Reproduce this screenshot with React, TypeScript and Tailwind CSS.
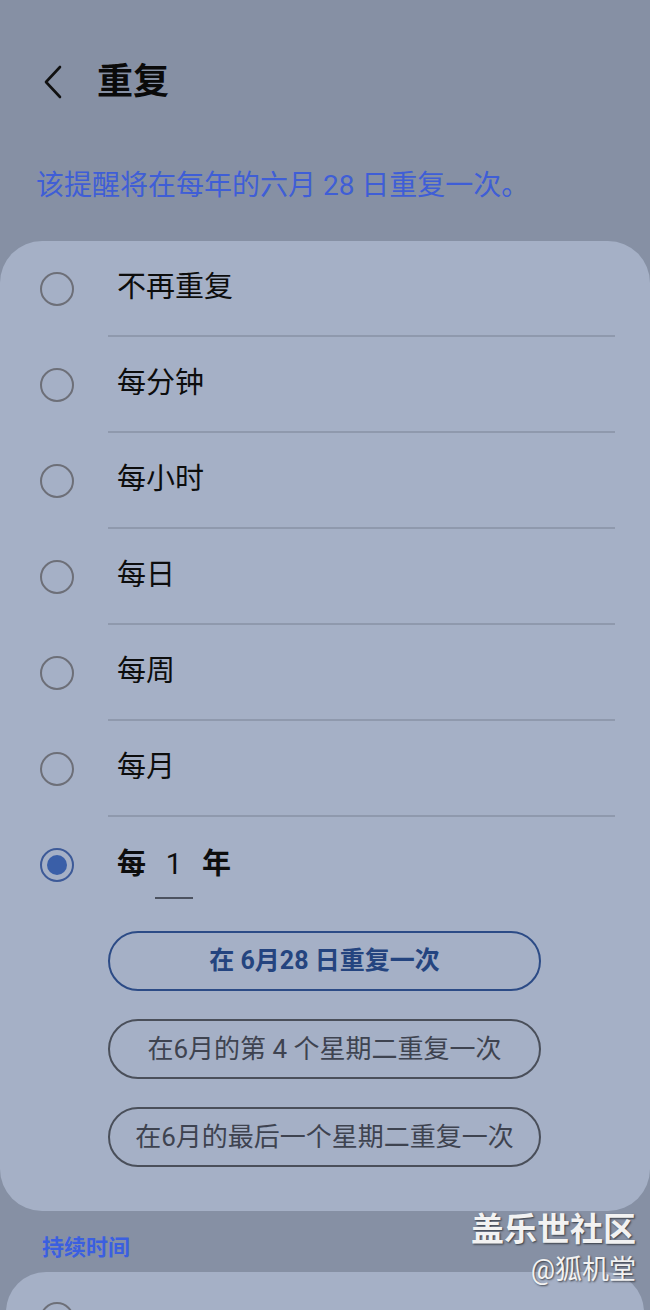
const font = "font-['Roboto','Noto_Sans_CJK_SC',sans-serif]";

const options = ["不再重复", "每分钟", "每小时", "每日", "每周", "每月"];

const Radio = ({ checked = false }: { checked?: boolean }) =>
    checked ? (
        <span className="flex h-[34px] w-[34px] items-center justify-center rounded-full border-2 border-[#3d5a98]">
            <span className="h-[20px] w-[20px] rounded-full bg-[#3a5fa8]" />
        </span>
    ) : (
        <span className="block h-[34px] w-[34px] rounded-full border-2 border-[#6d6f78]" />
    );

const ChoiceButton = ({ label, active = false }: { label: string; active?: boolean }) => (
    <div
        className={
            active
                ? "flex h-[60px] w-[433px] items-center justify-center rounded-full border-2 border-[#2c4b86] text-[25px] font-bold text-[#24447f]"
                : "flex h-[60px] w-[433px] items-center justify-center rounded-full border-2 border-[#4a4f5a] text-[26px] text-[#3e4350]"
        }
    >
        {label}
    </div>
);

export default function App() {
    return (
        <div className={`${font} relative h-[1310px] w-[650px] overflow-hidden bg-[#8690a4]`}>
            {/* header */}
            <div className="flex h-[164px] items-start pl-[40px] pt-[60px]">
                <svg width="28" height="40" viewBox="0 0 28 40" className="mt-[2px]">
                    <path d="M20 5 L6 20 L20 35" fill="none" stroke="#111" strokeWidth="2.6" strokeLinecap="round" strokeLinejoin="round" />
                </svg>
                <h1 className="ml-[29px] text-[36px] font-bold leading-[44px] text-[#0a0a0a]">重复</h1>
            </div>
            <p className="pl-[36px] text-[28px] leading-[44px] text-[#3f5ed6]">该提醒将在每年的六月 28 日重复一次。</p>

            {/* options card */}
            <div className="mt-[33px] rounded-[42px] bg-[#a5b0c6] pb-[44px]">
                {options.map((label) => (
                    <div key={label} className="flex h-[96px] items-stretch">
                        <div className="flex w-[108px] items-center justify-center pl-[6px]">
                            <Radio />
                        </div>
                        <div className="mr-[35px] flex flex-1 items-center border-b-2 border-[#8f99ad] pl-[9px] text-[29px] text-[#0d0d0d]">
                            {label}
                        </div>
                    </div>
                ))}
                <div className="flex h-[96px] items-center">
                    <div className="flex w-[108px] items-center justify-center pl-[6px]">
                        <Radio checked />
                    </div>
                    <div className="flex items-center gap-[9px] pl-[9px] text-[29px] font-bold text-[#0d0d0d]">
                        <span>每</span>
                        <span className="relative w-[38px] text-center font-normal">
                            1
                            <span className="absolute -bottom-[12px] left-0 h-[2px] w-[38px] bg-[#4c5260]" />
                        </span>
                        <span>年</span>
                    </div>
                </div>
                <div className="mt-[18px] flex flex-col gap-[28px] pl-[108px]">
                    <ChoiceButton label="在 6月28 日重复一次" active />
                    <ChoiceButton label="在6月的第 4 个星期二重复一次" />
                    <ChoiceButton label="在6月的最后一个星期二重复一次" />
                </div>
            </div>

            <p className="mt-[24px] pl-[42px] text-[22px] font-bold leading-[26px] text-[#3b5fe0]">持续时间</p>

            {/* second card (cut off) */}
            <div className="mx-[6px] mt-[11px] h-[80px] rounded-t-[40px] bg-[#a5b0c6] px-[34px] pt-[30px]">
                <Radio />
            </div>

            {/* watermark */}
            <div className="absolute right-[14px] top-[1208px] flex flex-col items-end text-[#f2f2f2] [text-shadow:1px_1px_2px_rgba(0,0,0,0.6)]">
                <span className="text-[33px] font-bold leading-[44px]">盖乐世社区</span>
                <span className="text-[27px] leading-[36px]">@狐机堂</span>
            </div>
        </div>
    );
}
